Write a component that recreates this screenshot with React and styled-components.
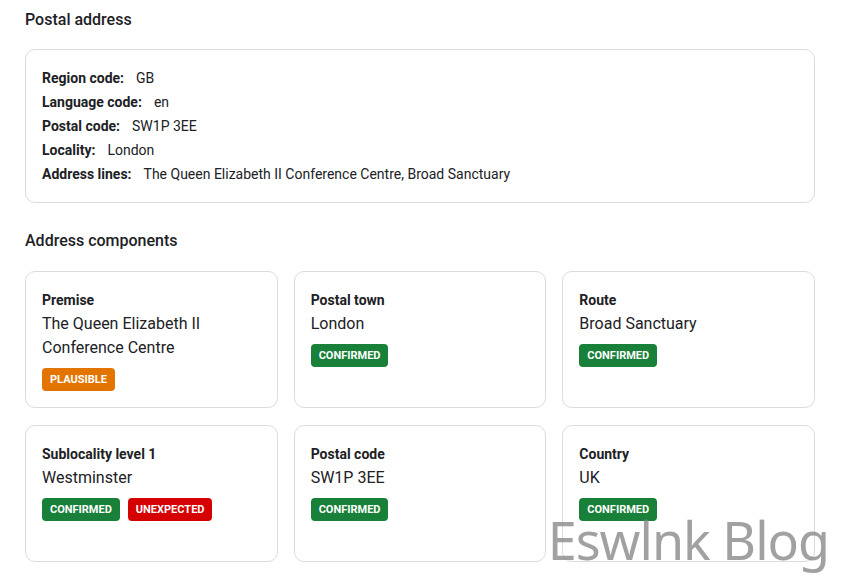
import styled, { createGlobalStyle } from "styled-components";

const GlobalStyle = createGlobalStyle`
  body {
    margin: 0;
    background: #fff;
    font-family: Roboto, "Liberation Sans", sans-serif;
    color: #202124;
  }
`;

const postal = [
  ["Region code:", "GB"],
  ["Language code:", "en"],
  ["Postal code:", "SW1P 3EE"],
  ["Locality:", "London"],
  ["Address lines:", "The Queen Elizabeth II Conference Centre, Broad Sanctuary"],
];

const components = [
  { type: "Premise", value: "The Queen Elizabeth II Conference Centre", tags: ["plausible"] },
  { type: "Postal town", value: "London", tags: ["confirmed"] },
  { type: "Route", value: "Broad Sanctuary", tags: ["confirmed"] },
  { type: "Sublocality level 1", value: "Westminster", tags: ["confirmed", "unexpected"] },
  { type: "Postal code", value: "SW1P 3EE", tags: ["confirmed"] },
  { type: "Country", value: "UK", tags: ["confirmed"] },
];

const tagColors = {
  confirmed: "#188038",
  plausible: "#e37400",
  unexpected: "#d50000",
};

const App = () => {
  return (
    <Page>
      <GlobalStyle />
      <Heading>Postal address</Heading>
      <AddressCard>
        {postal.map(([label, value]) => (
          <Row key={label}>
            <Label>{label}</Label>
            <span>{value}</span>
          </Row>
        ))}
      </AddressCard>

      <Heading $top={26} $bottom={18}>Address components</Heading>
      <Grid>
        {components.map((c) => (
          <ComponentCard key={c.type}>
            <CardTitle>{c.type}</CardTitle>
            <Value>{c.value}</Value>
            <Tags>
              {c.tags.map((t) => (
                <Tag key={t} $color={tagColors[t]}>
                  {t}
                </Tag>
              ))}
            </Tags>
          </ComponentCard>
        ))}
      </Grid>
      <Watermark>Eswlnk Blog</Watermark>
    </Page>
  );
};

const Page = styled.div`
  position: relative;
  padding: 8px 28px 20px 25px;
  min-height: 582px;
  box-sizing: border-box;
`;

const Heading = styled.h2`
  margin: ${(p) => p.$top || 0}px 0 ${(p) => p.$bottom || 17}px;
  font-size: 16px;
  line-height: 24px;
  font-weight: 500;
  color: #202124;
`;

const AddressCard = styled.div`
  border: 1px solid #dadce0;
  border-radius: 10px;
  padding: 16px;
  font-size: 14px;
`;

const Row = styled.div`
  display: flex;
  align-items: center;
  height: 24px;
  line-height: 24px;
`;

const Label = styled.span`
  font-weight: 700;
  margin-right: 12px;
`;

const Grid = styled.div`
  display: grid;
  grid-template-columns: repeat(3, 1fr);
  gap: 17px 16px;
`;

const ComponentCard = styled.div`
  border: 1px solid #dadce0;
  border-radius: 10px;
  padding: 16px;
  min-height: 137px;
  box-sizing: border-box;
`;

const CardTitle = styled.div`
  font-size: 14px;
  font-weight: 700;
  line-height: 24px;
`;

const Value = styled.div`
  font-size: 16px;
  line-height: 24px;
  padding-right: 60px;
`;

const Tags = styled.div`
  display: flex;
  gap: 8px;
  margin-top: 8px;
`;

const Tag = styled.span`
  background: ${(p) => p.$color};
  color: #fff;
  font-size: 11px;
  font-weight: 700;
  text-transform: uppercase;
  line-height: 23px;
  padding: 0 8px;
  border-radius: 4px;
`;

const Watermark = styled.div`
  position: absolute;
  right: 14px;
  bottom: 12px;
  font-family: "Noto Sans", "Open Sans", sans-serif;
  font-size: 52px;
  letter-spacing: -1px;
  line-height: 60px;
  color: rgba(130, 130, 130, 0.75);
  pointer-events: none;
`;

export default App;
